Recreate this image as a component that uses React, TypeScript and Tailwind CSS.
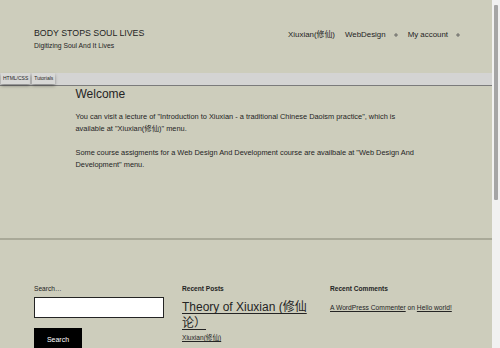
const FONT = "font-['Liberation_Sans','Noto_Sans_CJK_SC',Arial,sans-serif]";

function Plus() {
  return (
    <svg className="w-[4px] h-[4px] text-[#555]" viewBox="0 0 4 4" fill="none" stroke="currentColor" strokeWidth={0.8}>
      <path d="M2 0v4M0 2h4" />
    </svg>
  );
}

export default function App() {
  return (
    <div className={`${FONT} h-screen flex bg-[#cdcdbc] text-[#242424]`}>
      <div className="flex-1 overflow-hidden">
        {/* header */}
        <header className="h-[73px] pl-[34px] pr-[32px] pt-[28px] flex justify-between items-start">
          <div>
            <p className="text-[8.8px] leading-[11px]">BODY STOPS SOUL LIVES</p>
            <p className="text-[6.8px] leading-[9px] mt-[2px] font-medium">Digitizing Soul And It Lives</p>
          </div>
          <nav className="flex items-center text-[7.9px] leading-[10px] mt-[2px]">
            <a>Xiuxian(修仙)</a>
            <a className="ml-[10px]">WebDesign</a>
            <span className="ml-[8px]"><Plus /></span>
            <a className="ml-[10px]">My account</a>
            <span className="ml-[8px]"><Plus /></span>
          </nav>
        </header>

        {/* tutorial bar */}
        <div className="h-[13px] bg-[#d4d4d3] border-b border-[#7b7b7b] flex items-start gap-[2px] pl-[1px]">
          <span className="h-[11px] px-[2px] flex items-center text-[5px] bg-[#d8d8d6] shadow-[0_2px_3px_rgba(0,0,0,0.35)]">HTML/CSS</span>
          <span className="h-[11px] px-[2px] flex items-center text-[5px] bg-[#d8d8d6] shadow-[0_2px_3px_rgba(0,0,0,0.35)]">Tutorials</span>
        </div>

        {/* content */}
        <main className="w-[341px] mx-auto pt-[1px] h-[152px]">
          <h1 className="text-[12px] leading-[14px]">Welcome</h1>
          <p className="text-[7.4px] leading-[12px] mt-[10px]">
            You can visit a lecture of "Introduction to Xiuxian - a traditional Chinese Daoism practice", which is available at "Xiuxian(修仙)" menu.
          </p>
          <p className="text-[7.4px] leading-[12px] mt-[12px]">
            Some course assigments for a Web Design And Development course are availbale at "Web Design And Development" menu.
          </p>
        </main>

        <div className="h-[2px] bg-[#a9a998]" />

        {/* widgets */}
        <footer className="pl-[34px] pr-[32px] pt-[44px] grid grid-cols-3 gap-[18px]">
          <div>
            <label className="block text-[6.6px] leading-[9px]">Search…</label>
            <input className="mt-[4px] block w-[130px] h-[21px] bg-white border-[1.5px] border-[#242424] outline-none" />
            <button className="mt-[10px] w-[48px] h-[24px] bg-black text-white text-[7px]">Search</button>
          </div>
          <div>
            <h2 className="text-[6.6px] leading-[9px] font-bold">Recent Posts</h2>
            <a className="block mt-[6px] text-[12px] leading-[16px] underline underline-offset-[2px]">Theory of Xiuxian (修仙论）</a>
            <a className="block mt-[2px] text-[6.6px] leading-[9px] underline">Xiuxian(修仙)</a>
          </div>
          <div>
            <h2 className="text-[6.6px] leading-[9px] font-bold">Recent Comments</h2>
            <p className="mt-[10px] text-[6.7px] leading-[9px]">
              <a className="underline">A WordPress Commenter</a> on <a className="underline">Hello world!</a>
            </p>
          </div>
        </footer>
      </div>

      {/* scrollbar */}
      <div className="w-[8px] bg-[#f1f1f1] flex flex-col items-center pt-[5px] pb-[5px]">
        <div className="w-[4px] h-[195px] bg-[#a5a5a5] rounded-[1px]" />
      </div>
    </div>
  );
}
